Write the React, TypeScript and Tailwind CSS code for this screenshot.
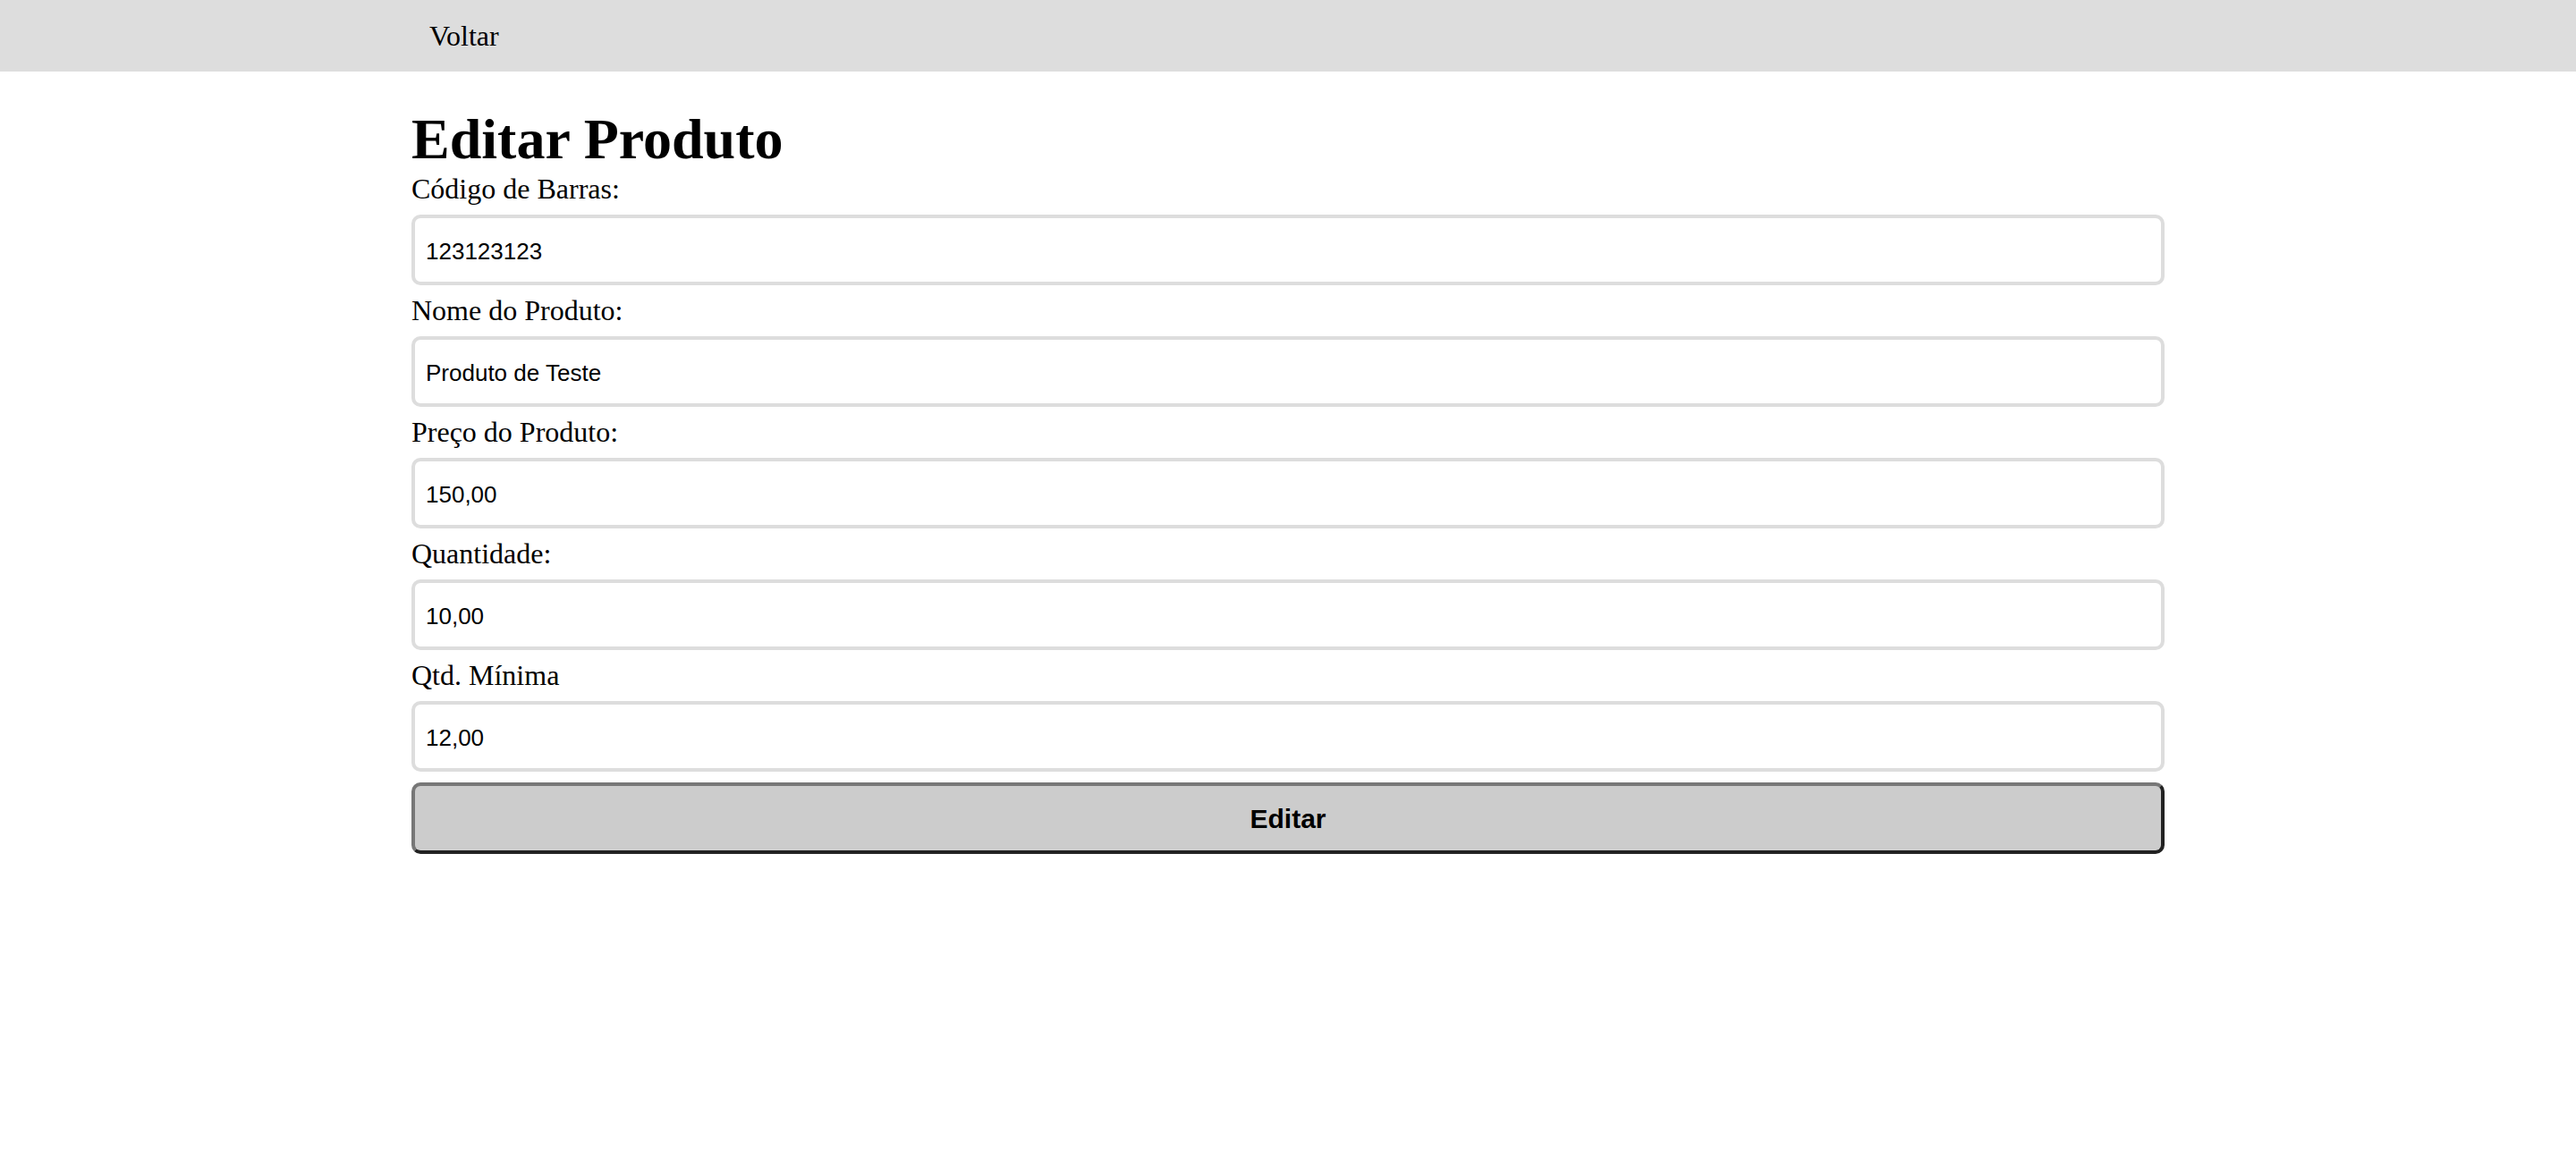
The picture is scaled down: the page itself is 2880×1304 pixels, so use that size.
const fields = [
  { label: "Código de Barras:", value: "123123123" },
  { label: "Nome do Produto:", value: "Produto de Teste" },
  { label: "Preço do Produto:", value: "150,00" },
  { label: "Quantidade:", value: "10,00" },
  { label: "Qtd. Mínima", value: "12,00" },
]

export default function App() {
  return (
    <div className="min-h-screen bg-white text-black font-['Liberation_Serif',serif]">
      <header className="h-[80px] bg-[#dddddd]">
        <div className="w-[1960px] mx-auto h-full flex items-center pl-[20px]">
          <a href="#" className="text-[32px] leading-[37px] text-black">Voltar</a>
        </div>
      </header>

      <main className="w-[1960px] mx-auto">
        <h1 className="mt-[39px] text-[64px] leading-[74px] font-bold">Editar Produto</h1>
        <form className="flex flex-col" onSubmit={(e) => e.preventDefault()}>
          {fields.map((f) => (
            <div key={f.label} className="flex flex-col">
              <label className="text-[32px] leading-[37px]">{f.label}</label>
              <input
                defaultValue={f.value}
                className="my-[10px] h-[79px] w-full border-[4px] border-[#dddddd] rounded-[10px] pl-[12px] pr-[12px] pt-[3px] text-[26px] font-['Liberation_Sans',Arial,sans-serif] text-black outline-none"
              />
            </div>
          ))}
          <button
            type="submit"
            className="mt-[2px] h-[80px] w-full rounded-[10px] bg-[#cccccc] border-[4px] border-t-[#777777] border-l-[#777777] border-b-[#222222] border-r-[#222222] text-[30px] font-bold font-['Liberation_Sans',Arial,sans-serif] text-black"
          >
            Editar
          </button>
        </form>
      </main>
    </div>
  )
}
